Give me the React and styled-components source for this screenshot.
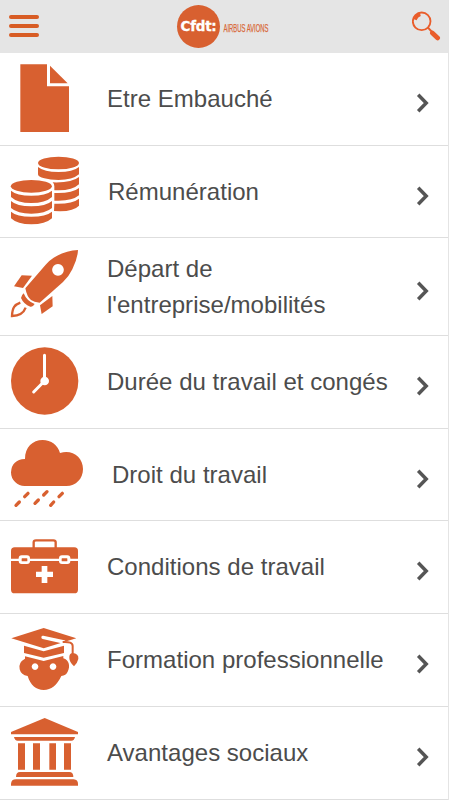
import React from "react"
import styled, { createGlobalStyle } from "styled-components"

const orange = "#d86030"

const FileIcon = () => (
  <Icon viewBox="0 159 300 276">
    <path d="M61 193H141V259H207V396H61Z" />
    <path d="M150 197L203 250H150Z" />
  </Icon>
)

const CoinsIcon = () => (
  <Icon viewBox="0 3 300 276">
    <ellipse cx="175.500" cy="54" rx="61.500" ry="19" />
    <path d="M114 66Q132 81 175.500 81T237 66V88Q218 105 175.500 105Q150 105 133 100Q114 96 114 88Z" />
    <path d="M158 112Q215 114 237 96V118Q218 136 176 136H163V124Q163 117 158 112Z" />
    <path d="M163 144Q216 146 237 129V151Q218 167 176 167H163Z" />
    <path d="M163 176Q216 178 237 161V182Q222 198 180 199L162 198Z" />
    <ellipse cx="94" cy="124" rx="61.500" ry="19" />
    <path d="M33 137Q50 152 94 152T156 137V156Q136 174 94 174T33 156Z" />
    <path d="M33 168Q50 184 94 184T156 168V189Q136 206 94 206T33 189Z" />
    <path d="M33 200Q50 215 94 215T156 200V220Q136 238 94 238T33 220Z" />
  </Icon>
)

const RocketIcon = () => (
  <Icon viewBox="0 0 300 276">
    <path
      fillRule="evenodd"
      d="M234 36Q197 37 161 59Q148 67 137 80L76 151Q81 177 93 186Q102 192 119 194L189 132Q206 117 217 94Q233 61 234 36ZM174 78A17.500 17.500 0 1 1 173.900 78Z"
    />
    <path d="M65 112L96 113L69 150L42 145Z" />
    <path d="M157 174L158 205L125 228L120 202Z" />
    <path d="M71 166Q80 189 104 198Q98 208 91 206Q71 199 63 180Q64 172 71 166Z" />
    <path
      d="M61 194C44 200 37 209 36 234C58 234 71 225 77 209"
      fill="none"
      stroke={orange}
      strokeWidth="7"
    />
  </Icon>
)

const ClockIcon = () => (
  <Icon viewBox="0 3 300 276">
    <circle cx="134" cy="138" r="101" />
    <path
      d="M133.500 61V138L101 171"
      fill="none"
      stroke="#fff"
      strokeWidth="9"
      strokeLinecap="round"
    />
    <circle cx="134" cy="138" r="13" fill="#fff" />
  </Icon>
)

const RainIcon = () => (
  <Icon viewBox="0 3 300 276">
    <path d="M75 174A41 41 0 0 1 33 133Q35 95 75 93C75 58 98 36 128 36C153 36 174 52 180 75C216 63 249 87 249 123C249 152 228 174 199 174Z" />
    <path
      d="M84 196L74 206M58 222L48 232M141 191L131 201M115 216L105 226M187 196L177 206M161 222L152 232"
      fill="none"
      stroke={orange}
      strokeWidth="10"
      strokeLinecap="round"
    />
  </Icon>
)

const CaseIcon = () => (
  <Icon viewBox="0 0 300 276">
    <path
      d="M101 81V64Q101 58 108 58H160Q167 58 167 64V81"
      fill="none"
      stroke={orange}
      strokeWidth="7"
    />
    <rect x="33" y="79" width="201" height="138" rx="11" />
    <path
      d="M33 116.500H234"
      fill="none"
      stroke="#fff"
      strokeWidth="7"
    />
    <rect x="56" y="103" width="34" height="26" rx="9" fill="#fff" />
    <rect x="177" y="103" width="34" height="26" rx="9" fill="#fff" />
    <rect x="65" y="112" width="17" height="9" rx="1" />
    <rect x="185" y="112" width="17" height="9" rx="1" />
    <path d="M125 135H142V152H159V168H142V186H125V168H108V152H125Z" fill="#fff" />
  </Icon>
)

const GraduateIcon = () => (
  <Icon viewBox="0 0 300 276">
    <path d="M131 42L229 73L131 103L34 73Z" />
    <path
      d="M129 70L192 84"
      fill="none"
      stroke="#fff"
      strokeWidth="10"
      strokeLinecap="round"
    />
    <path
      d="M188 84Q218 82 218 96V122"
      fill="none"
      stroke={orange}
      strokeWidth="6"
    />
    <path d="M72 95L131 112L192 95V117L131 131L72 117Z" />
    <path
      fillRule="evenodd"
      d="M75 127L131 141L190 126V133C207 138 212 157 203 173Q198 184 184 186C171 213 154 228 131 228C109 228 91 213 83 186Q63 183 59 166Q54 145 75 134ZM105 148A10 10 0 1 0 105.100 148ZM159 148A10 10 0 1 0 159.100 148Z"
    />
    <path d="M217 117Q237 118 235 135Q232 148 222 157Q208 144 208 132Q207 119 217 117Z" />
  </Icon>
)

const BankIcon = () => (
  <Icon viewBox="0 3 300 276">
    <path d="M134 36L234 78V85H33V78Z" />
    <path d="M42 93H225Q223 104 214 104H53Q44 104 42 93Z" />
    <path d="M54 112H75V191H54ZM99 112H120V191H99ZM148 112H168V191H148ZM192 112H213V191H192Z" />
    <path d="M48 213Q48 198 60 198H208Q220 198 220 213Z" />
    <path d="M33 239V233Q34 220 48 220H221Q234 221 234 234V239Z" />
  </Icon>
)

const items = [
  { label: "Etre Embauché", icon: FileIcon, height: 93 },
  { label: "Rémunération", icon: CoinsIcon, height: 92, indent: 1 },
  {
    label: "Départ de l'entreprise/mobilités",
    icon: RocketIcon,
    height: 98,
  },
  { label: "Durée du travail et congés", icon: ClockIcon, height: 93 },
  { label: "Droit du travail", icon: RainIcon, height: 92, indent: 5 },
  { label: "Conditions de travail", icon: CaseIcon, height: 93 },
  { label: "Formation professionnelle", icon: GraduateIcon, height: 93 },
  { label: "Avantages sociaux", icon: BankIcon, height: 93 },
]

const App = () => {
  return (
    <>
      <GlobalStyle />
      <Page>
        <Header>
          <MenuButton aria-label="Menu">
            <MenuBar />
            <MenuBar />
            <MenuBar />
          </MenuButton>
          <Brand>
            <Logo>Cfdt:</Logo>
            <BrandName viewBox="0 0 50 18">
              <text x="0.500" y="13" textLength="45" lengthAdjust="spacingAndGlyphs">
                AIRBUS AVIONS
              </text>
            </BrandName>
          </Brand>
          <SearchButton aria-label="Rechercher">
            <svg width="30" height="30" viewBox="0 0 90 90" fill="none">
              <circle cx="29" cy="31" r="26.500" stroke="#e95d2b" strokeWidth="5.500" />
              <path d="M9 26Q14 13 25 10" stroke="#e95d2b" strokeWidth="10" />
              <path d="M48 50L60 63" stroke="#e95d2b" strokeWidth="6" />
              <path
                d="M61 66L77 81"
                stroke="#e95d2b"
                strokeWidth="14"
                strokeLinecap="round"
              />
            </svg>
          </SearchButton>
        </Header>

        <List>
          {items.map(item => (
            <Row key={item.label} $height={item.height}>
              <item.icon />
              <Label $indent={item.indent}>{item.label}</Label>
              <Chevron viewBox="0 0 14 20">
                <path d="M2.200 1.800L10.200 10L2.200 18.200" />
              </Chevron>
            </Row>
          ))}
        </List>
      </Page>
    </>
  )
}

export default App

const GlobalStyle = createGlobalStyle`
  * {
    box-sizing: border-box;
  }
  body {
    margin: 0;
    background: #fff;
    font-family: "Liberation Sans", Arial, sans-serif;
    overflow: hidden;
  }
`

const Page = styled.div`
  width: 449px;
  height: 800px;
  border-right: 1px solid #e4e4e4;
`

const Header = styled.header`
  display: grid;
  grid-template-columns: 177px 1fr 36px;
  height: 53px;
  background: #e5e5e5;
`

const MenuButton = styled.button`
  display: flex;
  flex-direction: column;
  gap: 5px;
  width: 40px;
  padding: 15px 0 0 9px;
  border: 0;
  background: none;
`

const MenuBar = styled.span`
  width: 30px;
  height: 4px;
  border-radius: 2px;
  background: #d85c24;
`

const Brand = styled.div`
  display: flex;
  align-items: center;
`

const Logo = styled.div`
  width: 43px;
  height: 43px;
  border-radius: 50%;
  background: ${orange};
  color: #fff;
  font: bold 13.5px/43px "DejaVu Sans", sans-serif;
  letter-spacing: -0.3px;
  text-align: center;
  -webkit-text-stroke: 0.3px #fff;
`

const BrandName = styled.svg`
  width: 50px;
  height: 18px;
  margin: 2px 0 0 3px;
  overflow: visible;
  fill: #d86838;
  stroke: #d86838;
  stroke-width: 0.25px;
  font: 10.5px "Liberation Sans", Arial, sans-serif;
`

const SearchButton = styled.button`
  display: flex;
  padding: 11px 0 0;
  border: 0;
  background: none;
`

const List = styled.main`
  display: flex;
  flex-direction: column;
`

const Row = styled.a`
  display: flex;
  align-items: center;
  height: ${props => props.$height}px;
  border-bottom: 1px solid #dedede;
`

const Icon = styled.svg`
  flex: none;
  align-self: flex-start;
  width: 100px;
  height: 92px;
  fill: ${orange};
`

const Label = styled.span`
  flex: 1;
  padding-left: ${props => 7 + (props.$indent || 0)}px;
  color: #4c4c4c;
  font-size: 24px;
  letter-spacing: 0.02px;
  line-height: 36px;
`

const Chevron = styled.svg`
  flex: none;
  width: 14px;
  height: 20px;
  margin: 8px 18px 0 0;
  fill: none;
  stroke: #555;
  stroke-width: 3.5px;
`
